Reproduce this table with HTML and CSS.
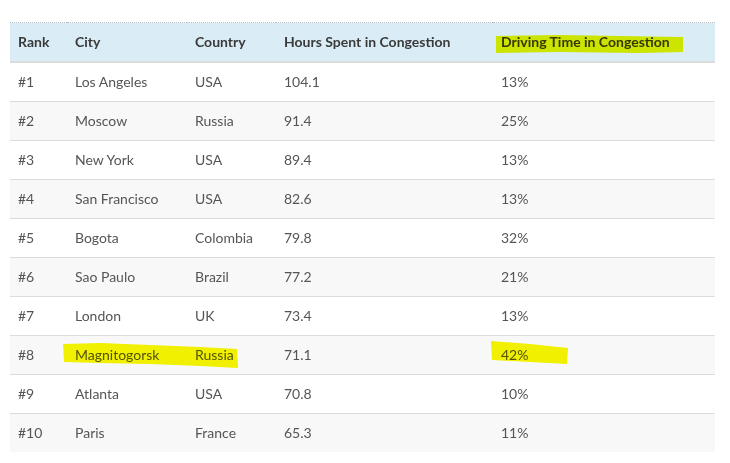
FILE: index.html
```html
<!DOCTYPE html>
<html>
<head>
<meta charset="utf-8">
<link rel="stylesheet" href="styles.css">
</head>
<body>
<div class="wrap">
  <table class="rank-table">
    <colgroup>
      <col class="c1"><col class="c2"><col class="c3"><col class="c4"><col class="c5">
    </colgroup>
    <thead>
      <tr><th>Rank</th><th>City</th><th>Country</th><th>Hours Spent in Congestion</th><th>Driving Time in Congestion</th></tr>
    </thead>
    <tbody>
      <tr><td>#1</td><td>Los Angeles</td><td>USA</td><td>104.1</td><td>13%</td></tr>
      <tr><td>#2</td><td>Moscow</td><td>Russia</td><td>91.4</td><td>25%</td></tr>
      <tr><td>#3</td><td>New York</td><td>USA</td><td>89.4</td><td>13%</td></tr>
      <tr><td>#4</td><td>San Francisco</td><td>USA</td><td>82.6</td><td>13%</td></tr>
      <tr><td>#5</td><td>Bogota</td><td>Colombia</td><td>79.8</td><td>32%</td></tr>
      <tr><td>#6</td><td>Sao Paulo</td><td>Brazil</td><td>77.2</td><td>21%</td></tr>
      <tr><td>#7</td><td>London</td><td>UK</td><td>73.4</td><td>13%</td></tr>
      <tr><td>#8</td><td>Magnitogorsk</td><td>Russia</td><td>71.1</td><td>42%</td></tr>
      <tr><td>#9</td><td>Atlanta</td><td>USA</td><td>70.8</td><td>10%</td></tr>
      <tr><td>#10</td><td>Paris</td><td>France</td><td>65.3</td><td>11%</td></tr>
    </tbody>
  </table>
  <svg class="marks" width="730" height="463" viewBox="0 0 730 463">
    <polygon class="hl-head" points="496,36 560,35 620,36 683,37 683,52 640,53 560,52 496,53"/>
    <polygon class="hl" points="63,344 100,343 150,345 200,347 237,349 238,368 200,366 150,364 100,363 64,362"/>
    <polygon class="hl" points="491,341 530,344 568,348 567,364 530,362 492,360"/>
  </svg>
</div>
</body>
</html>
```
FILE: styles.css
```css
html, body {
  margin: 0;
  padding: 0;
  background: #ffffff;
}
body {
  font-family: "Lato", "Liberation Sans", sans-serif;
  font-size: 14px;
  color: #555555;
}
.wrap {
  position: relative;
  width: 730px;
  height: 463px;
  padding: 22px 15px 0 10px;
  box-sizing: border-box;
}
.rank-table {
  width: 705px;
  border-collapse: collapse;
  table-layout: fixed;
  border-top: 1px dotted #b8bcc0;
}
.c1 { width: 57px; }
.c2 { width: 120px; }
.c3 { width: 89px; }
.c4 { width: 217px; }
.c5 { width: 222px; }
.rank-table th {
  background: #daecf5;
  color: #3a3a3a;
  font-weight: bold;
  text-align: left;
  height: 36px;
  padding: 0 8px 2px;
  border-bottom: 2px solid #dcdcdc;
  vertical-align: middle;
}
.rank-table td {
  height: 36px;
  padding: 0 8px 2px;
  border-top: 1px solid #dcdcdc;
  vertical-align: middle;
  color: #555555;
}
.rank-table tbody tr:nth-child(even) td {
  background: #f8f8f8;
}
.rank-table tbody tr:first-child td {
  border-top: 0;
}
.marks {
  position: absolute;
  left: 0;
  top: 0;
  pointer-events: none;
  mix-blend-mode: multiply;
}
.hl { fill: #f7f700; }
.hl-head { fill: #eef700; }
```
